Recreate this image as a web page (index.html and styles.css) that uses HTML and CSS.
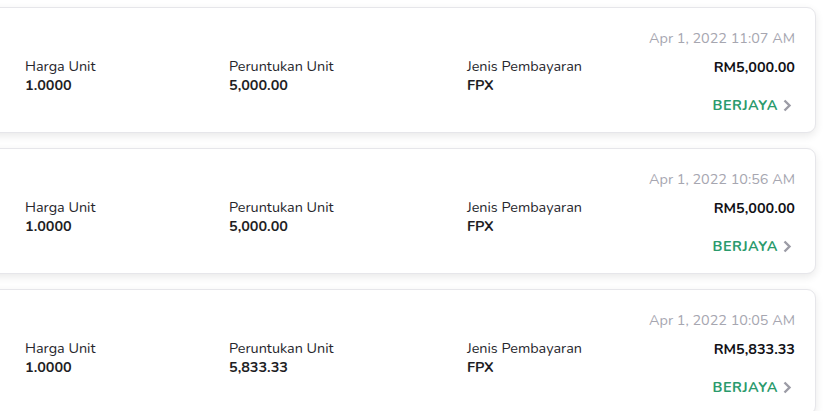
FILE: index.html
```html
<!DOCTYPE html>
<html>
<head>
<meta charset="utf-8">
<link rel="stylesheet" href="styles.css">
</head>
<body>
<div class="list">
  <div class="card">
    <div class="field"><div class="label">Harga Unit</div><div class="value">1.0000</div></div>
    <div class="field"><div class="label">Peruntukan Unit</div><div class="value">5,000.00</div></div>
    <div class="field"><div class="label">Jenis Pembayaran</div><div class="value">FPX</div></div>
    <div class="side">
      <div class="date">Apr 1, 2022 11:07 AM</div>
      <div class="amount">RM5,000.00</div>
      <div class="status">BERJAYA <svg class="chev" width="10" height="13" viewBox="0 0 10 13"><path d="M2.5 1.5 L7.5 6.5 L2.5 11.5" fill="none" stroke="#9c9ca6" stroke-width="2.4"/></svg></div>
    </div>
  </div>
  <div class="card">
    <div class="field"><div class="label">Harga Unit</div><div class="value">1.0000</div></div>
    <div class="field"><div class="label">Peruntukan Unit</div><div class="value">5,000.00</div></div>
    <div class="field"><div class="label">Jenis Pembayaran</div><div class="value">FPX</div></div>
    <div class="side">
      <div class="date">Apr 1, 2022 10:56 AM</div>
      <div class="amount">RM5,000.00</div>
      <div class="status">BERJAYA <svg class="chev" width="10" height="13" viewBox="0 0 10 13"><path d="M2.5 1.5 L7.5 6.5 L2.5 11.5" fill="none" stroke="#9c9ca6" stroke-width="2.4"/></svg></div>
    </div>
  </div>
  <div class="card">
    <div class="field"><div class="label">Harga Unit</div><div class="value">1.0000</div></div>
    <div class="field"><div class="label">Peruntukan Unit</div><div class="value">5,833.33</div></div>
    <div class="field"><div class="label">Jenis Pembayaran</div><div class="value">FPX</div></div>
    <div class="side">
      <div class="date">Apr 1, 2022 10:05 AM</div>
      <div class="amount">RM5,833.33</div>
      <div class="status">BERJAYA <svg class="chev" width="10" height="13" viewBox="0 0 10 13"><path d="M2.5 1.5 L7.5 6.5 L2.5 11.5" fill="none" stroke="#9c9ca6" stroke-width="2.4"/></svg></div>
    </div>
  </div>
</div>
</body>
</html>
```
FILE: styles.css
```css
html, body {
  margin: 0;
  padding: 0;
  background: #ffffff;
}
body {
  font-family: "Nunito", "Lato", "Noto Sans", sans-serif;
  color: #222228;
  overflow: hidden;
}
.list {
  display: flex;
  flex-direction: column;
  gap: 15px;
  padding-top: 7px;
  margin-left: -20px;
  width: 857px;
}
.card {
  width: 836px;
  box-sizing: border-box;
  border: 1px solid #e6e6ea;
  border-radius: 9px;
  background: #fff;
  box-shadow: 0 3px 8px rgba(0, 0, 0, 0.09);
  padding: 20px 20px 17px 44px;
  display: grid;
  grid-template-columns: 204px 238px 1fr auto;
  align-items: start;
}
.field {
  padding-top: 28px;
}
.label {
  font-size: 14.4px;
  line-height: 20px;
  color: #26262c;
}
.value {
  font-size: 14.4px;
  line-height: 19px;
  font-weight: 700;
  color: #1e1e24;
}
.side {
  display: flex;
  flex-direction: column;
  align-items: flex-end;
}
.date {
  font-size: 14.4px;
  line-height: 20px;
  color: #a6a6b0;
}
.amount {
  margin-top: 9px;
  font-size: 14.4px;
  line-height: 20px;
  font-weight: 700;
  color: #111116;
}
.status {
  margin-top: 18px;
  font-size: 14.4px;
  line-height: 20px;
  font-weight: 700;
  letter-spacing: 0.5px;
  color: #2a9a6c;
  display: flex;
  align-items: center;
  gap: 4px;
  margin-right: 3px;
}
.chev {
  display: block;
}
```
